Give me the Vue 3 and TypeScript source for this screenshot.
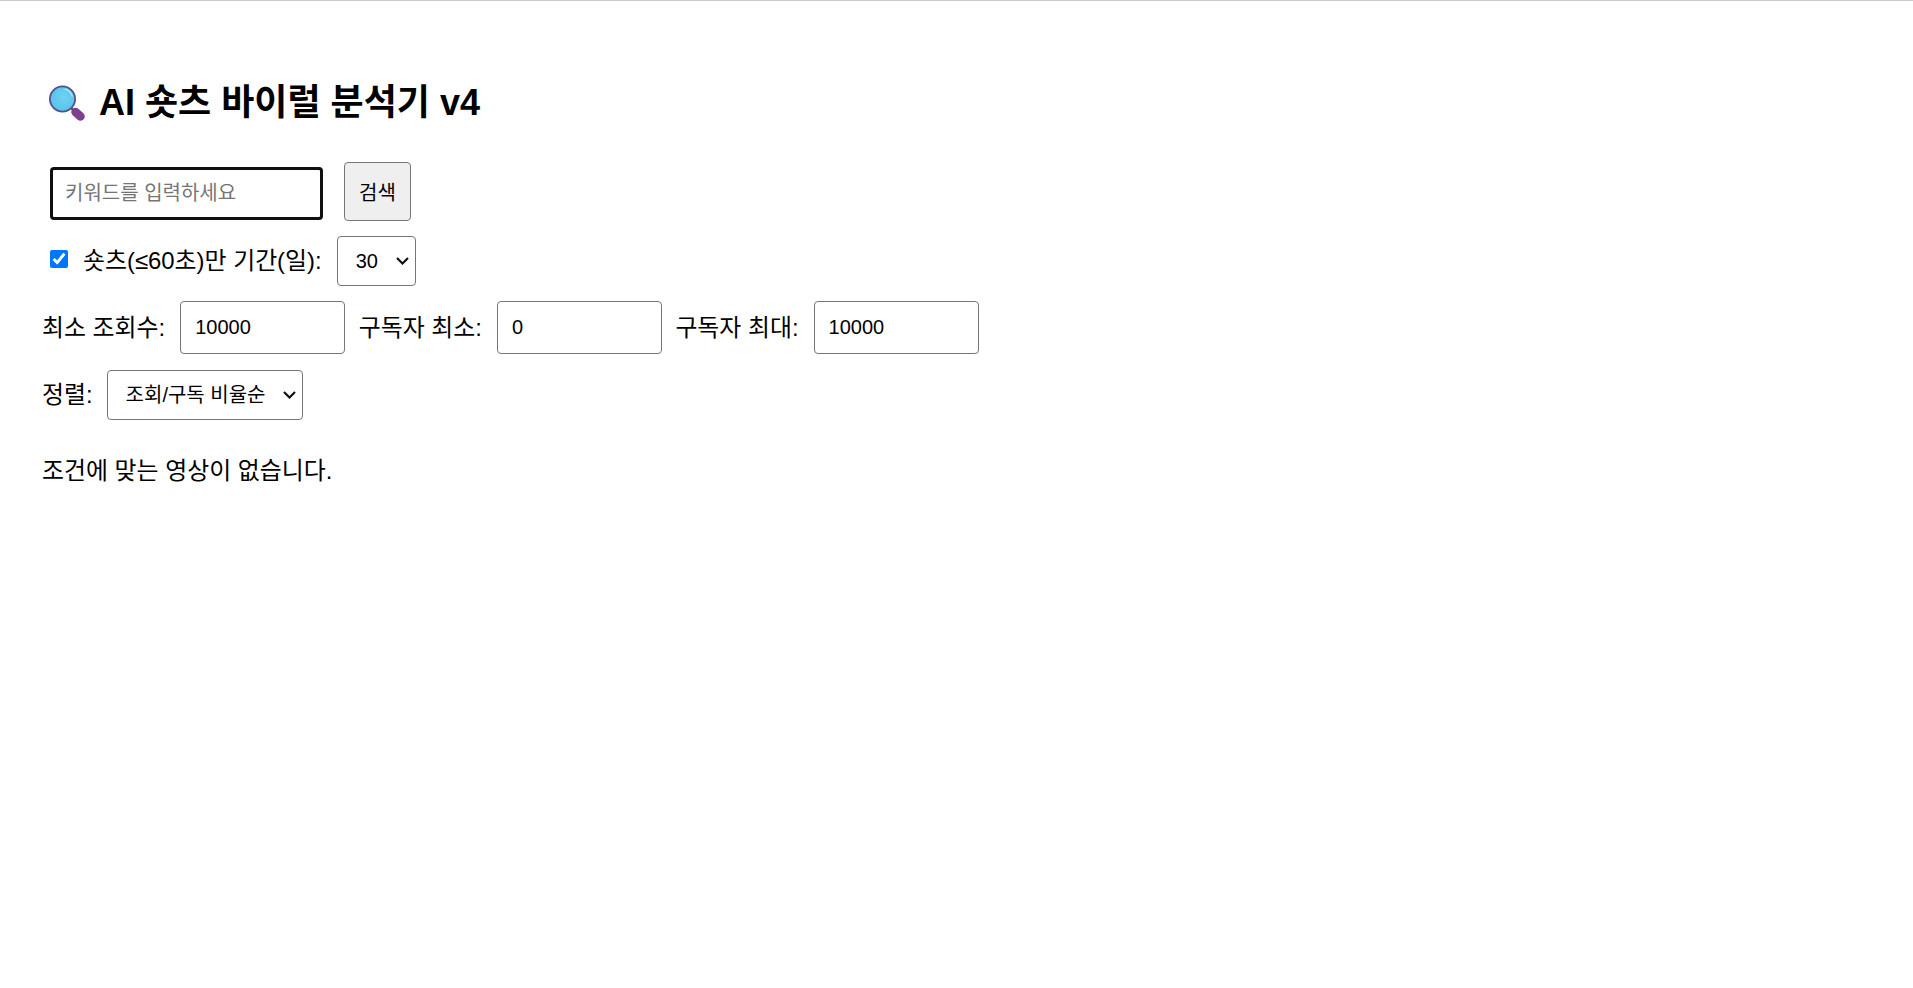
<script setup lang="ts">
import { ref } from 'vue'

const keyword = ref('')
const shortsOnly = ref(true)
const days = ref('30')
const minViews = ref(10000)
const subMin = ref(0)
const subMax = ref(10000)
const sort = ref('ratio')
</script>

<template>
  <main class="page">
    <h1 class="title">
      <svg class="emoji" viewBox="0 0 36 36" aria-hidden="true">
        <defs>
          <radialGradient id="lens" cx="0.55" cy="0.45" r="0.6">
            <stop offset="0" stop-color="#6fd3f2" />
            <stop offset="1" stop-color="#55c0e8" />
          </radialGradient>
        </defs>
        <path d="M22 23 L27 27" stroke="#54508f" stroke-width="2.5" />
        <path d="M26.5 27 L31.5 31.5" stroke="#7f3f8f" stroke-width="8.5" stroke-linecap="round" />
        <circle cx="13.5" cy="14" r="12.6" fill="url(#lens)" stroke="#54508f" stroke-width="1.8" />
        <path d="M16 4.2 A10 10 0 0 1 23.2 11" fill="none" stroke="#a5e6f7" stroke-width="1.4" stroke-linecap="round" />
      </svg>
      <span>AI 숏츠 바이럴 분석기 v4</span>
    </h1>

    <div class="row row-search">
      <input v-model="keyword" class="keyword" type="text" placeholder="키워드를 입력하세요" />
      <button class="search" type="button">검색</button>
    </div>

    <div class="row row-period">
      <input v-model="shortsOnly" class="check" type="checkbox" />
      <label class="check-label">숏츠(≤60초)만 기간(일):</label>
      <div class="select-wrap days">
        <select v-model="days" class="select">
          <option value="7">7</option>
          <option value="30">30</option>
          <option value="90">90</option>
        </select>
        <svg class="chevron" viewBox="0 0 13 8" aria-hidden="true">
          <path d="M1 1 L6.5 6.5 L12 1" />
        </svg>
      </div>
    </div>

    <div class="row row-numbers">
      <label>최소 조회수:</label>
      <input v-model="minViews" class="number" type="text" />
      <label>구독자 최소:</label>
      <input v-model="subMin" class="number" type="text" />
      <label>구독자 최대:</label>
      <input v-model="subMax" class="number" type="text" />
    </div>

    <div class="row row-sort">
      <label>정렬:</label>
      <div class="select-wrap sort">
        <select v-model="sort" class="select">
          <option value="ratio">조회/구독 비율순</option>
        </select>
        <svg class="chevron" viewBox="0 0 13 8" aria-hidden="true">
          <path d="M1 1 L6.5 6.5 L12 1" />
        </svg>
      </div>
    </div>

    <p class="empty">조건에 맞는 영상이 없습니다.</p>
  </main>
</template>

<style>
html, body { background: #fff; }
</style>

<style scoped>
.page {
  box-sizing: border-box;
  min-height: 988px;
  padding: 0 0 0 42px;
  border-top: 1px solid #ccc;
  color: #000;
  font-family: "Liberation Sans", "Noto Sans CJK KR", sans-serif;
  font-size: 23.9px;
}
.title {
  display: flex;
  align-items: center;
  gap: 14px;
  height: 40px;
  margin: 82px 0 0 7px;
  font-size: 36px;
  font-weight: 700;
  line-height: 40px;
}
.emoji { width: 36px; height: 36px; flex: none; }
.row { display: flex; align-items: center; }
.row label { white-space: nowrap; margin-bottom: 5px; }
input, select, button {
  box-sizing: border-box;
  font-family: inherit;
  font-size: 20px;
  color: #000;
}
.row-search { margin: 39px 0 0 8px; gap: 21px; align-items: flex-start; }
.keyword {
  width: 273px;
  height: 53px;
  margin-top: 5px;
  padding: 0 12px;
  border: 3px solid #101010;
  border-radius: 4px;
  outline: none;
}
.keyword::placeholder { color: #757575; }
.search {
  width: 67px;
  height: 59px;
  padding: 0;
  border: 1px solid #767676;
  border-radius: 4px;
  background: #efefef;
}
.row-period { margin: 15px 0 0 8px; height: 50px; }
.check { width: 18px; height: 18px; margin: 0 15px 5px 0; }
.check-label { margin-right: 15px; }
.select-wrap { position: relative; height: 50px; }
.select {
  display: block;
  width: 100%;
  height: 50px;
  padding: 0 24px 0 18px;
  border: 1px solid #767676;
  border-radius: 4px;
  background: #fff;
  appearance: none;
  outline: none;
}
.chevron {
  position: absolute;
  top: 21px;
  right: 7px;
  width: 13px;
  height: 8px;
  fill: none;
  stroke: #111;
  stroke-width: 2.2;
  pointer-events: none;
}
.days { width: 79px; }
.row-numbers { margin-top: 15px; height: 53px; }
.row-numbers label { margin-right: 15px; }
.number {
  width: 165px;
  height: 53px;
  margin-right: 13.5px;
  padding: 0 14px;
  border: 1px solid #767676;
  border-radius: 4px;
}
.row-sort { margin-top: 16px; height: 50px; gap: 14px; }
.sort { width: 196px; }
.empty { margin: 36px 0 0; line-height: 30px; }
</style>
